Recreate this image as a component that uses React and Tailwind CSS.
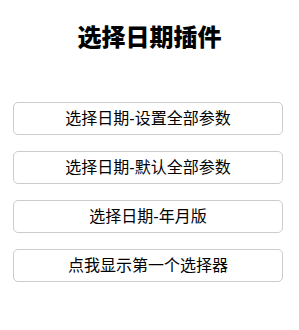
export default function App() {
  const buttons = [
    '选择日期-设置全部参数',
    '选择日期-默认全部参数',
    '选择日期-年月版',
    '点我显示第一个选择器',
  ]

  return (
    <div className="w-[299px] h-[330px] bg-white text-black font-['Liberation_Sans','Noto_Sans_CJK_SC',sans-serif]">
      {/* Title */}
      <h1 className="pt-[26px] text-center text-[24px] leading-[24px] font-black">选择日期插件</h1>

      {/* Buttons */}
      <div className="mt-[52px] flex flex-col gap-4 pl-[13px]">
        {buttons.map((label) => (
          <button
            key={label}
            className="w-[270px] h-[33px] rounded-[5px] border border-[#cccccc] bg-white text-[16px] leading-none text-black"
          >
            {label}
          </button>
        ))}
      </div>
    </div>
  )
}
